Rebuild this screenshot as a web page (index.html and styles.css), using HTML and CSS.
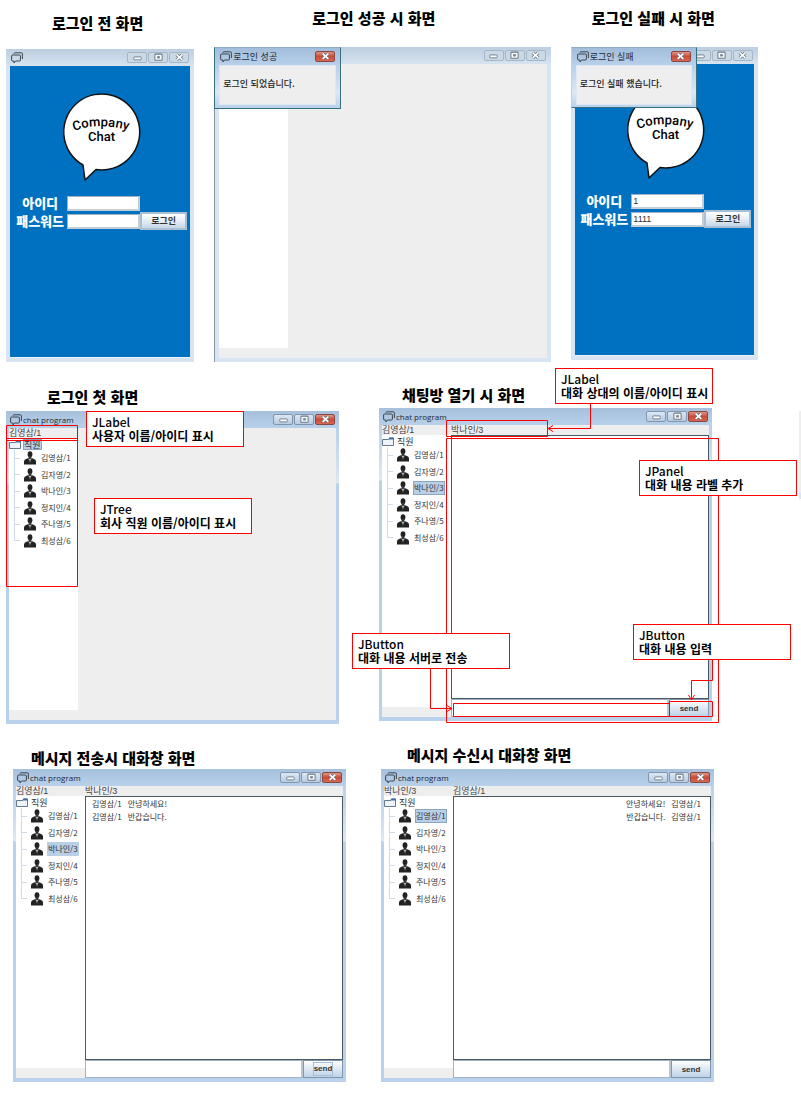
FILE: index.html
```html
<!DOCTYPE html>
<html lang="ko">
<head>
<meta charset="utf-8">
<title>Company Chat</title>
<link rel="stylesheet" href="styles.css">
</head>
<body>
<svg class="defs" aria-hidden="true">
  <symbol id="chat" viewBox="0 0 12 12"><path d="M3 1.700Q3 .8 4 .8H10.400Q11.400 .8 11.400 1.800V7M1.600 3H8.400Q9.400 3 9.400 4V8Q9.400 9 8.400 9H4.500L3 11V9H1.600Q.6 9 .6 8V4Q.6 3 1.600 3Z" fill="none" stroke="#3c4650" stroke-width="1"/></symbol>
  <symbol id="person" viewBox="0 0 12 14"><ellipse cx="6" cy="3.200" rx="2.400" ry="2.900" fill="#222"/><path d="M4.600 5h2.800v3H4.600z" fill="#333"/><path d="M0 13.500V10.500Q0 8.500 2 8L4.500 7 6 10 7.500 7 10 8Q12 8.500 12 10.500V13.500Z" fill="#222"/><path d="M4.500 7.200 6 12.500 7.500 7.200 6 8.400Z" fill="#e4e4e4"/><path d="M5.600 8.400h.8l.3 2.800-.7 1.300-.7-1.300z" fill="#222"/></symbol>
  <symbol id="folder" viewBox="0 0 12 9"><path d="M.5 2.500H6.500L7.500 1H11.500V8.500H.500Z" fill="#eef4fa" stroke="#65788c"/><path d="M7.500 .5h4v2h-5z" fill="#3f6ea3"/></symbol>
  <symbol id="min" viewBox="0 0 8 8"><rect x=".7" y="3.500" width="6.600" height="2.600" rx=".6" fill="#fff" stroke="#687888" stroke-width=".8"/></symbol>
  <symbol id="max" viewBox="0 0 8 8"><rect x=".8" y="1" width="6.400" height="5.500" rx=".6" fill="#fff" stroke="#687888" stroke-width=".9"/><path d="M3 3h2v1.600H3z" fill="#7d8997" stroke="#687888" stroke-width=".5"/></symbol>
  <symbol id="close" viewBox="0 0 8 8"><path d="M1.500 1.500 6.500 6.200M6.500 1.500 1.500 6.200" stroke="#60707f" stroke-width="2.800"/><path d="M1.500 1.500 6.500 6.200M6.500 1.500 1.500 6.200" stroke="#fff" stroke-width="1.500"/></symbol>
</svg>
<main>
  <section class="row row-login">
    <figure class="fig-before">
      <figcaption>로그인 전 화면</figcaption>
      <div class="stage"><div class="window inactive">
        <header class="titlebar"><svg class="app"><use href="#chat"/></svg><h2></h2>
          <button aria-label="최소화"><svg><use href="#min"/></svg></button><button aria-label="최대화"><svg><use href="#max"/></svg></button><button aria-label="닫기"><svg><use href="#close"/></svg></button></header>
        <div class="login">
          <svg class="logo" viewBox="0 0 80 92" role="img" aria-label="Company Chat">
            <path d="M21 75A38 38 0 1 1 34 79.500L23 90Z" fill="#fff" stroke="#111" stroke-width="1.500" stroke-linejoin="round"/>
            <path id="arc1" d="M12 41Q38 31 72 42" fill="none"/>
            <text><textPath href="#arc1">Company</textPath></text>
            <text x="26" y="51">Chat</text>
          </svg>
          <form>
            <label for="id1">아이디</label><input id="id1" type="text">
            <label for="pw1">패스워드</label><input id="pw1" type="text"><button type="button">로그인</button>
          </form>
        </div>
      </div></div>
    </figure>
    <figure class="fig-success">
      <figcaption>로그인 성공 시 화면</figcaption>
      <div class="stage"><div class="window inactive edge">
        <header class="titlebar"><h2></h2>
          <button aria-label="최소화"><svg><use href="#min"/></svg></button><button aria-label="최대화"><svg><use href="#max"/></svg></button><button aria-label="닫기"><svg><use href="#close"/></svg></button></header>
        <div class="client"><div class="side"><div class="tree"></div></div><div class="empty"></div></div>
      </div>
      <div class="dialog" role="dialog" aria-label="로그인 성공">
        <header class="titlebar"><svg class="app"><use href="#chat"/></svg><h2>로그인 성공</h2><button class="close" aria-label="닫기"><svg><use href="#close"/></svg></button></header>
        <p>로그인 되었습니다.</p>
      </div></div>
    </figure>
    <figure class="fig-fail">
      <figcaption>로그인 실패 시 화면</figcaption>
      <div class="stage"><div class="window inactive">
        <header class="titlebar"><h2></h2>
          <button aria-label="최소화"><svg><use href="#min"/></svg></button><button aria-label="최대화"><svg><use href="#max"/></svg></button><button aria-label="닫기"><svg><use href="#close"/></svg></button></header>
        <div class="login">
          <svg class="logo" viewBox="0 0 80 92" role="img" aria-label="Company Chat">
            <path d="M21 75A38 38 0 1 1 34 79.500L23 90Z" fill="#fff" stroke="#111" stroke-width="1.500" stroke-linejoin="round"/>
            <path id="arc2" d="M12 41Q38 31 72 42" fill="none"/>
            <text><textPath href="#arc2">Company</textPath></text>
            <text x="26" y="51">Chat</text>
          </svg>
          <form>
            <label for="id2">아이디</label><input id="id2" type="text" value="1">
            <label for="pw2">패스워드</label><input id="pw2" type="text" value="1111"><button type="button">로그인</button>
          </form>
        </div>
      </div>
      <div class="dialog" role="dialog" aria-label="로그인 실패">
        <header class="titlebar"><svg class="app"><use href="#chat"/></svg><h2>로그인 실패</h2><button class="close" aria-label="닫기"><svg><use href="#close"/></svg></button></header>
        <p>로그인 실패 했습니다.</p>
      </div></div>
    </figure>
  </section>

  <section class="row row-main">
    <figure class="fig-first">
      <figcaption>로그인 첫 화면</figcaption>
      <div class="stage"><div class="window">
        <header class="titlebar"><svg class="app"><use href="#chat"/></svg><h2>chat program</h2>
          <button aria-label="최소화"><svg><use href="#min"/></svg></button><button aria-label="최대화"><svg><use href="#max"/></svg></button><button class="close" aria-label="닫기"><svg><use href="#close"/></svg></button></header>
        <div class="client">
          <div class="side"><p class="user">김영삼/1</p>
            <div class="tree"><p class="root"><svg><use href="#folder"/></svg><span class="selected">직원</span></p>
              <ul>
                <li><svg><use href="#person"/></svg><span>김영삼/1</span></li>
                <li><svg><use href="#person"/></svg><span>김자영/2</span></li>
                <li><svg><use href="#person"/></svg><span>박나인/3</span></li>
                <li><svg><use href="#person"/></svg><span>정지인/4</span></li>
                <li><svg><use href="#person"/></svg><span>주나영/5</span></li>
                <li><svg><use href="#person"/></svg><span>최성삼/6</span></li>
              </ul></div></div>
          <div class="empty"></div>
        </div>
      </div>
      <svg class="marks" aria-hidden="true"><path d="M.5 14.500H71.500V29.500H.500ZM.5 27.500H71.500V175.500H.500Z"/></svg>
      <div class="note note-user"><b>JLabel</b><br>사용자 이름/아이디 표시</div>
      <div class="note note-tree"><b>JTree</b><br>회사 직원 이름/아이디 표시</div>
      </div>
    </figure>
    <figure class="fig-open">
      <figcaption>채팅방 열기 시 화면</figcaption>
      <div class="stage"><div class="window">
        <header class="titlebar"><svg class="app"><use href="#chat"/></svg><h2>chat program</h2>
          <button aria-label="최소화"><svg><use href="#min"/></svg></button><button aria-label="최대화"><svg><use href="#max"/></svg></button><button class="close" aria-label="닫기"><svg><use href="#close"/></svg></button></header>
        <div class="client">
          <div class="side"><p class="user">김영삼/1</p>
            <div class="tree"><p class="root"><svg><use href="#folder"/></svg><span>직원</span></p>
              <ul>
                <li><svg><use href="#person"/></svg><span>김영삼/1</span></li>
                <li><svg><use href="#person"/></svg><span>김자영/2</span></li>
                <li><svg><use href="#person"/></svg><span class="selected">박나인/3</span></li>
                <li><svg><use href="#person"/></svg><span>정지인/4</span></li>
                <li><svg><use href="#person"/></svg><span>주나영/5</span></li>
                <li><svg><use href="#person"/></svg><span>최성삼/6</span></li>
              </ul></div></div>
          <div class="room"><p class="user">박나인/3</p><div class="log"></div>
            <form class="send"><input type="text" aria-label="대화 내용"><button type="button"><span>send</span></button></form></div>
        </div>
      </div>
      <svg class="marks" aria-hidden="true">
        <path d="M67.500 12.500H168.500V28.500H67.500ZM67.500 30.500H339.500V314.500H67.500ZM74.500 295.500H290.500V308.500H74.500ZM290.500 293.500H333.500V308.500H290.500Z"/>
        <path d="M211.500-4V20.500H169M174 17.500 169 20.500 174 23.500M51.500 261V300.500H73M68 297.500 73 300.500 68 303.500M333.500 252V272.500H312.500V292M309.500 287 312.500 292 315.500 287"/>
      </svg>
      <div class="note note-peer"><b>JLabel</b><br>대화 상대의 이름/아이디 표시</div>
      <div class="note note-panel"><b>JPanel</b><br>대화 내용 라벨 추가</div>
      <div class="note note-send"><b>JButton</b><br>대화 내용 서버로 전송</div>
      <div class="note note-input"><b>JButton</b><br>대화 내용 입력</div>
      </div>
    </figure>
  </section>

  <section class="row row-chat">
    <figure class="fig-sent">
      <figcaption>메시지 전송시 대화창 화면</figcaption>
      <div class="stage"><div class="window">
        <header class="titlebar"><svg class="app"><use href="#chat"/></svg><h2>chat program</h2>
          <button aria-label="최소화"><svg><use href="#min"/></svg></button><button aria-label="최대화"><svg><use href="#max"/></svg></button><button class="close" aria-label="닫기"><svg><use href="#close"/></svg></button></header>
        <div class="client">
          <div class="side"><p class="user">김영삼/1</p>
            <div class="tree"><p class="root"><svg><use href="#folder"/></svg><span>직원</span></p>
              <ul>
                <li><svg><use href="#person"/></svg><span>김영삼/1</span></li>
                <li><svg><use href="#person"/></svg><span>김자영/2</span></li>
                <li><svg><use href="#person"/></svg><span class="selected plain">박나인/3</span></li>
                <li><svg><use href="#person"/></svg><span>정지인/4</span></li>
                <li><svg><use href="#person"/></svg><span>주나영/5</span></li>
                <li><svg><use href="#person"/></svg><span>최성삼/6</span></li>
              </ul></div></div>
          <div class="room"><p class="user">박나인/3</p>
            <div class="log"><p><span>김영삼/1</span><span>안녕하세요!</span></p><p><span>김영삼/1</span><span>반갑습니다.</span></p></div>
            <form class="send"><input type="text" aria-label="대화 내용"><button type="button"><span class="focus">send</span></button></form></div>
        </div>
      </div></div>
    </figure>
    <figure class="fig-received">
      <figcaption>메시지 수신시 대화창 화면</figcaption>
      <div class="stage"><div class="window">
        <header class="titlebar"><svg class="app"><use href="#chat"/></svg><h2>chat program</h2>
          <button aria-label="최소화"><svg><use href="#min"/></svg></button><button aria-label="최대화"><svg><use href="#max"/></svg></button><button class="close" aria-label="닫기"><svg><use href="#close"/></svg></button></header>
        <div class="client">
          <div class="side"><p class="user">박나인/3</p>
            <div class="tree"><p class="root"><svg><use href="#folder"/></svg><span>직원</span></p>
              <ul>
                <li><svg><use href="#person"/></svg><span class="selected">김영삼/1</span></li>
                <li><svg><use href="#person"/></svg><span>김자영/2</span></li>
                <li><svg><use href="#person"/></svg><span>박나인/3</span></li>
                <li><svg><use href="#person"/></svg><span>정지인/4</span></li>
                <li><svg><use href="#person"/></svg><span>주나영/5</span></li>
                <li><svg><use href="#person"/></svg><span>최성삼/6</span></li>
              </ul></div></div>
          <div class="room"><p class="user">김영삼/1</p>
            <div class="log incoming"><p><span>안녕하세요!</span><span>김영삼/1</span></p><p><span>반갑습니다.</span><span>김영삼/1</span></p></div>
            <form class="send"><input type="text" aria-label="대화 내용"><button type="button"><span>send</span></button></form></div>
        </div>
      </div></div>
    </figure>
  </section>
</main>
</body>
</html>
```
FILE: styles.css
```css
* { box-sizing: border-box; }
body { margin: 0; background: #fff; color: #000; font-family: "Noto Sans CJK KR", sans-serif; overflow-x: hidden; }
p, h2, ul, figure { margin: 0; padding: 0; }
svg { display: block; flex: none; }
button { font-family: inherit; padding: 0; margin: 0; }
.defs { position: absolute; width: 0; height: 0; }
main { padding-bottom: 12px; }

.row { display: grid; align-items: start; position: relative; }
.row-login { grid-template-columns: 188fr 336fr 187fr; column-gap: 20px; padding: 0 43px 0 6px; }
.row-main { grid-template-columns: 1fr 1fr; column-gap: 40px; padding: 0 89px 0 6px; }
.row-main::after { content: ""; position: absolute; right: 0; top: 49px; width: 2px; height: 82px; background: #eee; border-bottom: 6px solid #d9e5f2; }
.row-chat { grid-template-columns: 1fr 1fr; column-gap: 35px; padding: 0 87px 0 13px; }

figcaption { font-size: 15px; line-height: 20px; font-weight: 900; white-space: nowrap; }
.fig-before { padding-top: 13px; }
.fig-before figcaption { padding: 0 0 16px 46px; }
.fig-success { padding-top: 8px; }
.fig-success figcaption { padding: 0 0 19px 98px; }
.fig-fail { padding-top: 8px; }
.fig-fail figcaption { padding: 0 0 19px 21px; }
.fig-first { padding-top: 25px; }
.fig-first figcaption { padding: 0 0 4px 41px; }
.fig-open { padding-top: 23px; }
.fig-open figcaption { padding: 0 0 3px 23px; }
.fig-sent { padding-top: 24px; }
.fig-sent figcaption { padding: 0 0 1px 18px; }
.fig-received { padding-top: 21px; }
.fig-received figcaption { padding: 0 0 4px 26px; }

.stage { position: relative; }
.window { display: flex; flex-direction: column; min-height: 313px; padding: 0 3px 4px; background: linear-gradient(#a6c0dd, #b9d1ea 18px, #d5e2f1 60px, #dfe8f3 72px, #b9d1ea 73px); }
.window.inactive { padding: 0 4px 4px; background: linear-gradient(#bccee0, #d8e4f1 18px); }
.window.edge { border-left: 1px solid #8b98a5; min-height: 315px; }
.titlebar { display: flex; align-items: center; gap: 1px; height: 17px; padding: 0 1px; }
.titlebar .app { width: 12px; height: 12px; }
.titlebar h2 { flex: 1; font: 400 8px/16px "Open Sans", sans-serif; color: #1c2732; white-space: nowrap; }
.titlebar button { display: grid; place-items: center; width: 20px; height: 11px; border: 1px solid #8296ad; border-radius: 2px; background: linear-gradient(#dce8f4, #b7cbdf); }
.inactive .titlebar button { border-color: #a6b5c6; background: #cbd9e7; }
.titlebar button svg { width: 9px; height: 9px; }
.titlebar button.close { background: linear-gradient(#dd9789, #cc4935 50%, #d96753); border-color: #884740; }

.login { flex: 1; display: flex; flex-direction: column; align-items: center; background: #0070c0; border-bottom: 1px solid #eef4fa; padding-top: 24px; }
.login .logo { width: 80px; height: 92px; margin: 0 0 12px 3px; }
.logo text { font: 500 13px Roboto, sans-serif; fill: #000; }
.login form { display: grid; grid-template-columns: 54px 73px 47px; grid-auto-rows: 18px; align-items: center; }
.login label { grid-column: 1; color: #fff; font-size: 13px; line-height: 18px; font-weight: 900; text-align: center; white-space: nowrap; }
.login input { width: 100%; height: 15px; border: 1px solid #9fb2c6; border-right: 2px solid #c5ced7; border-bottom: 2px solid #c5ced7; background: #fff; padding: 0 1px; font: 9px "Liberation Sans", sans-serif; color: #333; }
.login form button { height: 18px; border: 2px solid #a8bfd4; background: linear-gradient(#fff, #e5edf6 50%, #c5d6e8); font-size: 9px; font-weight: 700; line-height: 12px; color: #333; }

.dialog { position: absolute; left: 0; top: 0; width: 127px; height: 62px; border: 1px solid #37717f; border-top-color: #93adc7; background: linear-gradient(#a2bddb, #b9d1ea 18px, #dce7f3 45px, #b9d1ea); padding: 0 4px 4px; }
.dialog .titlebar h2 { font-family: "Noto Sans CJK KR", sans-serif; font-size: 9px; }
.fig-fail .dialog { width: 126px; height: 61px; border-left-color: #b9d1ea; }
.dialog p { height: 40px; background: #eee; border: 1px solid #dce8f5; font-size: 9px; line-height: 36px; font-weight: 500; color: #222; padding-left: 3px; white-space: nowrap; }

.client { flex: 1; display: grid; grid-template-columns: 69px 1fr; background: #eee; }
.side { display: flex; flex-direction: column; padding-bottom: 10px; }
.user { height: 10px; font: 9px/10px "Liberation Sans", "Noto Sans CJK KR", sans-serif; color: #444; white-space: nowrap; }
.tree { flex: 1; background: #fff; font-size: 8px; color: #333; }
.root { display: flex; align-items: center; gap: 2px; height: 12px; font-size: 9px; line-height: 11px; }
.root svg { width: 12px; height: 9px; }
.tree ul { list-style: none; display: grid; grid-template-rows: repeat(6, 1fr); min-height: 99px; margin-left: 5px; background: linear-gradient(#cbdcec, #cbdcec) left top / 1px 91px no-repeat; }
.tree li { display: flex; align-items: center; white-space: nowrap; line-height: 14px; }
.tree li::before { content: ""; width: 6px; height: 1px; background: #cbdcec; margin-right: 4px; }
.tree li svg { width: 12px; height: 14px; margin-right: 4px; }
.tree span { padding: 0 1px; }
.selected { background: #b8cfe5; outline: 1px solid #8aa5c4; outline-offset: -1px; }
.selected.plain { outline: 0; }
.room { display: flex; flex-direction: column; min-width: 0; }
.log { flex: 1; background: #fff; border: 1px solid #4c5860; padding: 0 6px; font-size: 8px; line-height: 13px; color: #333; }
.log p { display: flex; gap: 6px; }
.log.incoming p { justify-content: flex-end; }
.log.incoming { padding-right: 9px; }
.send { display: flex; height: 18px; }
.send input { flex: 1; min-width: 0; border: 1px solid #9fb2c6; border-right: 2px solid #b9c6d3; background: #fff; margin: 0; }
.send button { width: 40px; border: 1px solid #8296ad; background: linear-gradient(#fff, #dde8f3 50%, #bed2e6); font: bold 8px "Liberation Sans", sans-serif; color: #333; }
.focus { display: inline-block; outline: 1px solid #a5bfd9; line-height: 12px; }

.marks { position: absolute; left: 0; top: 0; width: 100%; height: 100%; overflow: visible; }
.marks path { fill: none; stroke: #f00; stroke-width: 1; }
.note { position: absolute; width: 158px; height: 36px; border: 1px solid #f00; background: #fff; padding: 3px 5px; font-size: 12px; line-height: 14px; font-weight: 700; white-space: nowrap; }
.note b { font-weight: 500; }
.note-user { left: 80px; top: 0; }
.note-tree { left: 88px; top: 87px; }
.note-peer { left: 176px; top: -40px; }
.note-panel { left: 260px; top: 52px; }
.note-send { left: -27px; top: 225px; }
.note-input { left: 254px; top: 216px; }
```
